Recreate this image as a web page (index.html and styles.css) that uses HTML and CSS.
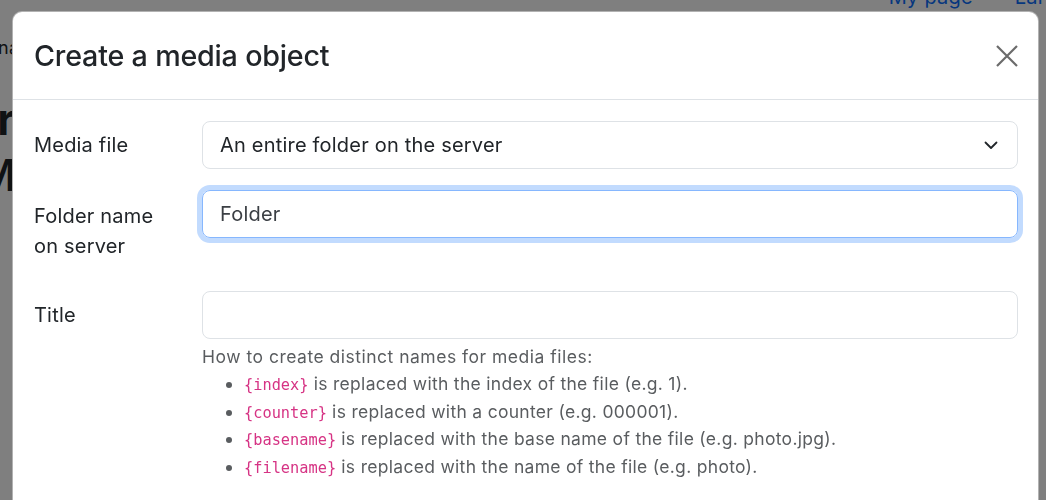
FILE: index.html
```html
<!DOCTYPE html>
<html lang="en">
<head>
<meta charset="utf-8">
<title>Create a media object</title>
<link rel="stylesheet" href="styles.css">
</head>
<body>
<div class="page">
  <nav class="topnav">
    <a class="navlink" href="#">My page</a>
    <a class="navlink" href="#">Language</a>
  </nav>
  <div class="crumb">Diana</div>
  <h1 class="page-title">Fr</h1>
  <h1 class="page-title second">M</h1>
</div>
<div class="backdrop"></div>
<div class="modal">
  <div class="modal-header">
    <h5 class="modal-title">Create a media object</h5>
    <button class="btn-close" type="button" aria-label="Close">
      <svg width="22" height="22" viewBox="0 0 22 22"><path d="M1 1L21 21M21 1L1 21" stroke="#6b6b6b" stroke-width="2.2" fill="none"/></svg>
    </button>
  </div>
  <div class="modal-body">
    <div class="row">
      <label class="col-label">Media file</label>
      <div class="col-field">
        <div class="form-select">
          <span>An entire folder on the server</span>
          <svg class="chev" width="14" height="9" viewBox="0 0 14 9"><path d="M1.5 1.5L7 7L12.5 1.5" stroke="#212529" stroke-width="1.8" fill="none" stroke-linecap="round" stroke-linejoin="round"/></svg>
        </div>
      </div>
    </div>
    <div class="row row-tall">
      <label class="col-label">Folder name on server</label>
      <div class="col-field">
        <div class="form-control focus">Folder</div>
      </div>
    </div>
    <div class="row">
      <label class="col-label">Title</label>
      <div class="col-field">
        <div class="form-control"></div>
        <div class="form-text">
          <div>How to create distinct names for media files:</div>
          <ul class="help-list">
            <li><code>{index}</code> is replaced with the index of the file (e.g. 1).</li>
            <li><code>{counter}</code> is replaced with a counter (e.g. 000001).</li>
            <li><code>{basename}</code> is replaced with the base name of the file (e.g. photo.jpg).</li>
            <li><code>{filename}</code> is replaced with the name of the file (e.g. photo).</li>
          </ul>
        </div>
      </div>
    </div>
  </div>
</div>
</body>
</html>
```

FILE: styles.css
```css
* { box-sizing: border-box; }
html, body { margin: 0; padding: 0; }
body {
  width: 1046px;
  height: 500px;
  overflow: hidden;
  background: #ffffff;
  font-family: Inter, "Noto Sans", "Liberation Sans", sans-serif;
  color: #212529;
  font-size: 20px;
  line-height: 1.5;
  letter-spacing: 0.2px;
}
.page { position: relative; }
.topnav {
  display: flex;
  justify-content: flex-end;
  gap: 42px;
  margin-top: -18px;
  margin-right: -64px;
  height: 30px;
}
.navlink { color: #0d6efd; text-decoration: none; font-size: 20px; }
.crumb {
  margin-left: -30px;
  margin-top: 22px;
  font-size: 18px;
  color: #212529;
}
.page-title {
  margin: 30px 0 0 -28px;
  font-size: 44px;
  font-weight: 700;
  line-height: 56px;
}
.page-title.second { margin-top: 0; margin-left: -24px; font-weight: 500; }

.backdrop {
  position: fixed;
  inset: 0;
  background: rgba(0, 0, 0, 0.5);
}
.modal {
  position: fixed;
  top: 11px;
  left: 12px;
  width: 1027px;
  height: 560px;
  background: #fff;
  border: 1px solid rgba(0, 0, 0, 0.3);
  border-radius: 10px;
}
.modal-header {
  display: flex;
  align-items: center;
  justify-content: space-between;
  padding: 21px 20px 21px 21px;
  border-bottom: 1px solid #dee2e6;
}
.modal-title {
  margin: 0;
  font-size: 28.7px;
  font-weight: 500;
  line-height: 45px;
  letter-spacing: -0.2px;
  color: #212529;
}
.btn-close {
  border: 0;
  background: transparent;
  padding: 0;
  width: 22px;
  height: 22px;
  display: flex;
}
.modal-body { padding: 21px 20px 20px 21px; }
.row {
  display: grid;
  grid-template-columns: 168px 1fr;
  align-items: start;
  margin-bottom: 21px;
}
.col-label {
  padding: 9px 26px 9px 0;
  line-height: 30px;
}
.row-tall .col-label { padding-top: 11px; }
.form-select, .form-control {
  height: 48px;
  border: 1px solid #dee2e6;
  border-radius: 8px;
  padding: 0 17px;
  display: flex;
  align-items: center;
  color: #212529;
  font-size: 20px;
}
.form-select { justify-content: space-between; padding-right: 19px; }
.form-control.focus {
  border-color: #86b7fe;
  box-shadow: 0 0 0 5px rgba(13, 110, 253, 0.25);
  color: #3b3f44;
}
.form-text {
  margin-top: 5px;
  font-size: 17.5px;
  line-height: 26px;
  letter-spacing: 0.5px;
  color: rgba(33, 37, 41, 0.75);
}
.help-list {
  margin: 0;
  padding-left: 42px;
}
.help-list li { line-height: 27.6px; letter-spacing: 0.3px; }
.help-list li::marker { color: rgba(33, 37, 41, 0.75); }
code {
  font-family: "DejaVu Sans Mono", "Liberation Mono", monospace;
  font-size: 15.3px;
  line-height: 1;
  letter-spacing: 0;
  color: #d63384;
}
```
